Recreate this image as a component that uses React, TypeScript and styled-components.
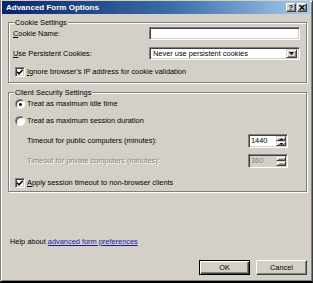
import styled, { createGlobalStyle } from "styled-components";

const GlobalStyle = createGlobalStyle`
  html, body {
    margin: 0;
    padding: 0;
    background: #ffffff;
  }
  body {
    font-family: "Liberation Sans", Arial, sans-serif;
    font-size: 7.4px;
    color: #000;
  }
`;

const Window = styled.div`
  width: 313px;
  height: 283px;
  box-sizing: border-box;
  background: #d4d0c8;
  border: 1px solid #404040;
  border-top-color: #d4d0c8;
  border-left-color: #808080;
  border-bottom: 2px solid #000;
  box-shadow: inset 1px 1px #ffffff, inset -1px -1px #808080;
  padding: 0 2px 1px 1px;
  display: flex;
  flex-direction: column;
`;

const TitleBar = styled.div`
  height: 13px;
  display: flex;
  align-items: center;
  justify-content: space-between;
  padding: 0 3px 0 4px;
  background: linear-gradient(90deg, #0a246a 0%, #3a6ea5 55%, #a6caf0 100%);
  color: #fff;
  font-weight: bold;
  font-size: 8px;
`;

const CaptionButtons = styled.div`
  display: flex;
  gap: 1px;
`;

const CaptionButton = styled.div`
  width: 10px;
  height: 9px;
  box-sizing: border-box;
  background: #d4d0c8;
  border: 1px solid;
  border-color: #ffffff #404040 #404040 #ffffff;
  box-shadow: inset -1px -1px #808080;
  color: #000;
  font-size: 7px;
  font-weight: bold;
  line-height: 7px;
  display: flex;
  align-items: center;
  justify-content: center;
`;

const Body = styled.div`
  flex: 1;
  display: flex;
  flex-direction: column;
  padding: 3px 3px 5px 6px;
`;

const Group = styled.fieldset<{ $mt?: number; $pb?: number }>`
  margin: ${({ $mt }) => $mt ?? 0}px 0 0 0;
  padding: 0 6px ${({ $pb }) => $pb ?? 0}px 4px;
  min-width: 0;
  border: 1px solid #808080;
  box-shadow: inset 1px 1px #ffffff, 1px 1px #ffffff;
`;

const Legend = styled.legend`
  padding: 2px 1px 0;
  margin-left: 1px;
  line-height: 8px;
  background: #d4d0c8;
`;

const Row = styled.div<{ $mt?: number; $h?: number; $indent?: number }>`
  display: flex;
  align-items: center;
  height: ${({ $h }) => $h ?? 12}px;
  margin-top: ${({ $mt }) => $mt ?? 0}px;
  padding-left: ${({ $indent }) => $indent ?? 0}px;
  line-height: 10px;
`;

const Label = styled.span<{ $disabled?: boolean }>`
  flex: 1;
  color: ${({ $disabled }) => ($disabled ? "#808080" : "#000")};
  text-shadow: ${({ $disabled }) => ($disabled ? "1px 1px #ffffff" : "none")};
  white-space: nowrap;
`;

const Sunken = styled.div`
  box-sizing: border-box;
  border: 1px solid;
  border-color: #808080 #ffffff #ffffff #808080;
  box-shadow: inset 1px 1px #404040, inset -1px -1px #d4d0c8;
`;

const TextBox = styled(Sunken)`
  width: 151px;
  height: 13px;
  background: #fff;
`;

const Select = styled(Sunken)`
  width: 151px;
  height: 13px;
  background: #fff;
  display: flex;
  align-items: center;
  padding: 2px 2px 2px 3px;
`;

const SelectText = styled.span`
  flex: 1;
  white-space: nowrap;
`;

const RaisedBtn = styled.div`
  box-sizing: border-box;
  background: #d4d0c8;
  border: 1px solid;
  border-color: #d4d0c8 #404040 #404040 #d4d0c8;
  box-shadow: inset 1px 1px #ffffff, inset -1px -1px #808080;
  display: flex;
  align-items: center;
  justify-content: center;
`;

const DropButton = styled(RaisedBtn)`
  width: 11px;
  height: 9px;
`;

const Check = styled(Sunken)`
  width: 10px;
  height: 10px;
  margin: 0 2px 0 2px;
  background: #fff;
  display: flex;
  align-items: center;
  justify-content: center;
`;

const Radio = styled.div`
  width: 10px;
  height: 10px;
  box-sizing: border-box;
  margin: 0 2px 0 2px;
  border-radius: 50%;
  background: #fff;
  border: 1px solid;
  border-color: #808080 #ffffff #ffffff #808080;
  box-shadow: inset 1px 1px #404040;
  display: flex;
  align-items: center;
  justify-content: center;
`;

const Dot = styled.div`
  width: 3px;
  height: 3px;
  border-radius: 50%;
  background: #000;
`;

const Spin = styled(Sunken)<{ $disabled?: boolean }>`
  width: 40px;
  height: 14px;
  margin-right: 12px;
  display: flex;
  background: ${({ $disabled }) => ($disabled ? "#d4d0c8" : "#fff")};
  color: ${({ $disabled }) => ($disabled ? "#808080" : "#000")};
`;

const SpinText = styled.div`
  flex: 1;
  padding: 0 2px;
  display: flex;
  align-items: center;
`;

const SpinButtons = styled.div`
  width: 10px;
  display: flex;
  flex-direction: column;
  padding: 1px 1px 1px 0;
`;

const SpinButton = styled(RaisedBtn)`
  flex: 1;
`;

const Footer = styled.div`
  margin-top: auto;
  display: flex;
  flex-direction: column;
`;

const Help = styled.div`
  height: 10px;
  line-height: 10px;
  padding-left: 2px;
`;

const Link = styled.a`
  color: #1a1aa6;
  text-decoration: underline;
`;

const Buttons = styled.div`
  display: flex;
  justify-content: flex-end;
  gap: 6px;
  margin-top: 13px;
`;

const PushButton = styled.button<{ $default?: boolean }>`
  width: 51px;
  height: 15px;
  box-sizing: border-box;
  padding: 0;
  font: inherit;
  color: #000;
  background: #d4d0c8;
  border: 1px solid;
  border-color: ${({ $default }) =>
    $default ? "#000" : "#ffffff #404040 #404040 #ffffff"};
  box-shadow: ${({ $default }) =>
    $default
      ? "inset 1px 1px #ffffff, inset -1px -1px #404040, inset -2px -2px #808080"
      : "inset -1px -1px #808080"};
`;

function CheckMark() {
  return (
    <svg width="8" height="8" viewBox="0 0 8 8">
      <polyline points="1.2,3.8 3,5.8 6.8,1.8" fill="none" stroke="#000" strokeWidth="1.5" />
    </svg>
  );
}

function Arrow({ up, color = "#000", w = 5 }: { up?: boolean; color?: string; w?: number }) {
  const h = Math.ceil(w / 2);
  const pts = up ? `0,${h} ${w},${h} ${w / 2},0` : `0,0 ${w},0 ${w / 2},${h}`;
  return (
    <svg width={w} height={h} viewBox={`0 0 ${w} ${h}`}>
      <polygon points={pts} fill={color} />
    </svg>
  );
}

function CloseGlyph() {
  return (
    <svg width="6" height="5" viewBox="0 0 6 5">
      <path d="M0.5 0 L5.5 5 M5.5 0 L0.5 5" stroke="#000" strokeWidth="1.3" />
    </svg>
  );
}

function SpinBox({ value, disabled }: { value: string; disabled?: boolean }) {
  const c = disabled ? "#808080" : "#000";
  return (
    <Spin $disabled={disabled}>
      <SpinText>{value}</SpinText>
      <SpinButtons>
        <SpinButton>
          <Arrow up color={c} w={3} />
        </SpinButton>
        <SpinButton>
          <Arrow color={c} w={3} />
        </SpinButton>
      </SpinButtons>
    </Spin>
  );
}

export default function App() {
  return (
    <>
      <GlobalStyle />
      <Window>
        <TitleBar>
          <span>Advanced Form Options</span>
          <CaptionButtons>
            <CaptionButton>?</CaptionButton>
            <CaptionButton>
              <CloseGlyph />
            </CaptionButton>
          </CaptionButtons>
        </TitleBar>
        <Body>
          <Group $pb={4}>
            <Legend>Cookie Settings</Legend>
            <Row $h={13}>
              <Label>
                <u>C</u>ookie Name:
              </Label>
              <TextBox />
            </Row>
            <Row $h={13} $mt={7}>
              <Label>
                <u>U</u>se Persistent Cookies:
              </Label>
              <Select>
                <SelectText>Never use persistent cookies</SelectText>
                <DropButton>
                  <Arrow />
                </DropButton>
              </Select>
            </Row>
            <Row $mt={6}>
              <Check>
                <CheckMark />
              </Check>
              <Label>
                <u>I</u>gnore browser's IP address for cookie validation
              </Label>
            </Row>
          </Group>
          <Group $mt={4} $pb={2}>
            <Legend>Client Security Settings</Legend>
            <Row $mt={1}>
              <Radio>
                <Dot />
              </Radio>
              <Label>Treat as maximum idle time</Label>
            </Row>
            <Row $mt={5}>
              <Radio />
              <Label>Treat as maximum session duration</Label>
            </Row>
            <Row $mt={7} $h={14} $indent={14}>
              <Label>Timeout for public computers (minutes):</Label>
              <SpinBox value="1440" />
            </Row>
            <Row $mt={6} $h={14} $indent={14}>
              <Label $disabled>Timeout for private computers (minutes):</Label>
              <SpinBox value="360" disabled />
            </Row>
            <Row $mt={9}>
              <Check>
                <CheckMark />
              </Check>
              <Label>
                <u>A</u>pply session timeout to non-browser clients
              </Label>
            </Row>
          </Group>
          <Footer>
            <Help>
              Help about <Link href="#">advanced form preferences</Link>
            </Help>
            <Buttons>
              <PushButton $default>OK</PushButton>
              <PushButton>Cancel</PushButton>
            </Buttons>
          </Footer>
        </Body>
      </Window>
    </>
  );
}
